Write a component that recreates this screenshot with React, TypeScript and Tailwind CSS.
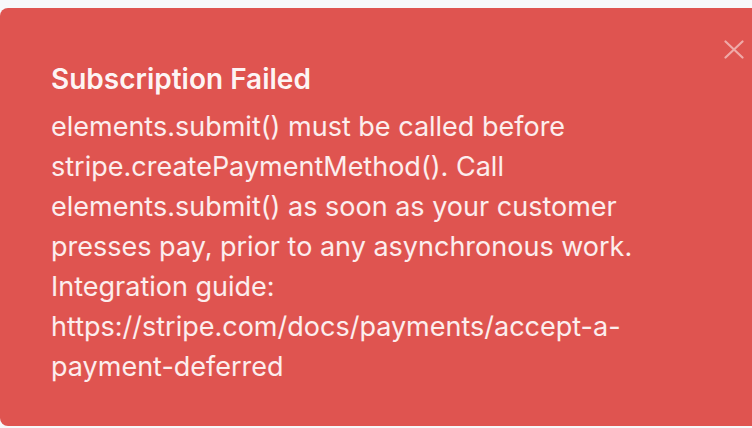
export default function App() {
  return (
    <div className="h-[428px] w-full overflow-hidden bg-[#f7f8fa] pt-2">
      <div
        className="relative h-[418px] w-[760px] rounded-lg bg-[#df5450] pl-[51px] pt-[55px] text-white"
        style={{ fontFamily: 'Inter, "Noto Sans", sans-serif' }}
      >
        <button className="absolute left-[724px] top-[32px] text-white/50">
          <svg width="20" height="19" viewBox="0 0 20 19" fill="none" stroke="currentColor" strokeWidth="2.2" strokeLinecap="round">
            <path d="M1.5 1.5 L18.5 17.5 M18.5 1.5 L1.5 17.5" />
          </svg>
        </button>
        <h2 className="text-[28px] font-semibold leading-[32px] text-white/95">Subscription Failed</h2>
        <p className="mt-[12px] w-[640px] text-[27px] leading-[40px] text-white/90">
          elements.submit() must be called before stripe.createPaymentMethod(). Call elements.submit() as soon
          as your customer presses pay, prior to any asynchronous work. Integration guide:
          https://stripe.com/docs/payments/accept-a-payment-deferred
        </p>
      </div>
    </div>
  );
}
